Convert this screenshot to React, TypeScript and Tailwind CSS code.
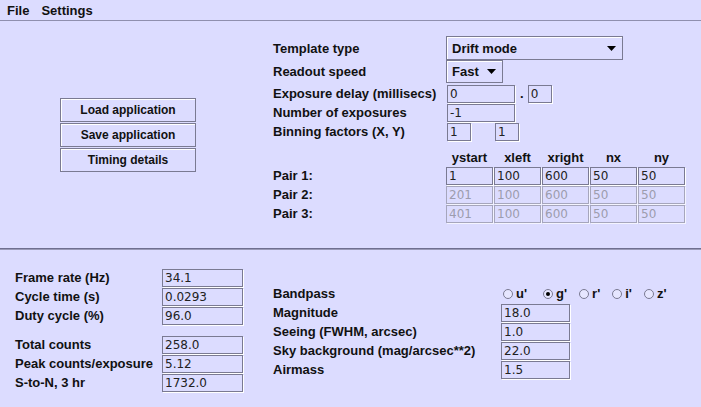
import React from 'react';

function Field({
  value,
  className,
  disabled,
}: {
  value: string;
  className: string;
  disabled?: boolean;
}) {
  return (
    <div
      className={`h-[18px] flex items-center pl-[2px] bg-[#dcdcff] font-['DejaVu_Sans',sans-serif] text-[12px] font-normal leading-none ${
        disabled
          ? 'border border-[#a6a6bc] text-[#9c9cae] shadow-[1px_1px_0_#f4f4ff]'
          : 'border border-[#7a7a92] text-[#222] shadow-[1px_1px_0_#ffffff]'
      } ${className}`}
    >
      {value}
    </div>
  );
}

function Arrow() {
  return (
    <svg width="9" height="5" viewBox="0 0 9 5">
      <polygon points="0,0 9,0 4.5,5" fill="#000" />
    </svg>
  );
}

function Combo({ label, className }: { label: string; className: string }) {
  return (
    <div
      className={`h-full flex items-center justify-between pl-[5px] pr-[6px] border border-[#7a7a92] shadow-[inset_1px_1px_0_#fff] ${className}`}
    >
      <span>{label}</span>
      <Arrow />
    </div>
  );
}

function Button({ label }: { label: string }) {
  return (
    <div className="w-[136px] h-[24px] flex items-center justify-center border border-[#7a7a92] shadow-[inset_1px_1px_0_#fff] text-[12px] font-bold">
      {label}
    </div>
  );
}

function Radio({ label, checked }: { label: string; checked?: boolean }) {
  return (
    <div className="flex items-center gap-[3px]">
      <span className="w-[10px] h-[10px] rounded-full border border-[#7a7a92] bg-[#e6e6ff] flex items-center justify-center">
        {checked && <span className="w-[4px] h-[4px] rounded-full bg-black" />}
      </span>
      <span>{label}</span>
    </div>
  );
}

export default function App() {
  const headers = ['ystart', 'xleft', 'xright', 'nx', 'ny'];
  const pairs = [
    { name: 'Pair 1:', values: ['1', '100', '600', '50', '50'], disabled: false },
    { name: 'Pair 2:', values: ['201', '100', '600', '50', '50'], disabled: true },
    { name: 'Pair 3:', values: ['401', '100', '600', '50', '50'], disabled: true },
  ];
  const timing = [
    ['Frame rate (Hz)', '34.1'],
    ['Cycle time (s)', '0.0293'],
    ['Duty cycle (%)', '96.0'],
  ];
  const counts = [
    ['Total counts', '258.0'],
    ['Peak counts/exposure', '5.12'],
    ['S-to-N, 3 hr', '1732.0'],
  ];
  const target = [
    ['Magnitude', '18.0'],
    ['Seeing (FWHM, arcsec)', '1.0'],
    ['Sky background (mag/arcsec**2)', '22.0'],
    ['Airmass', '1.5'],
  ];

  return (
    <div className="w-[701px] h-[407px] overflow-hidden bg-[#dcdcff] text-[#111] font-['Liberation_Sans',Arial,sans-serif] text-[13px] font-bold leading-none">
      {/* menu bar */}
      <div className="h-[21px] flex items-center gap-[12px] pl-[7px] border-b border-[#8f8fae]">
        <span>File</span>
        <span>Settings</span>
      </div>

      {/* top section */}
      <div className="h-[227px] flex">
        <div className="flex flex-col justify-center gap-px pl-[60px]">
          <Button label="Load application" />
          <Button label="Save application" />
          <Button label="Timing details" />
        </div>

        <div className="ml-[77px] pt-[15px] flex flex-col">
          <div className="flex items-center h-[24px]">
            <span className="w-[173px]">Template type</span>
            <Combo label="Drift mode" className="w-[177px]" />
          </div>
          <div className="flex items-center h-[23px] mb-px">
            <span className="w-[173px]">Readout speed</span>
            <Combo label="Fast" className="w-[57px]" />
          </div>
          <div className="flex items-center h-[19px]">
            <span className="w-[173px]">Exposure delay (millisecs)</span>
            <Field value="0" className="w-[68px] ml-px" />
            <span className="ml-[5px] mr-[4px]">.</span>
            <Field value="0" className="w-[24px]" />
          </div>
          <div className="flex items-center h-[19px]">
            <span className="w-[173px]">Number of exposures</span>
            <Field value="-1" className="w-[68px] ml-px" />
          </div>
          <div className="flex items-center h-[19px]">
            <span className="w-[173px]">Binning factors (X, Y)</span>
            <Field value="1" className="w-[24px] ml-px" />
            <Field value="1" className="w-[24px] ml-[24px]" />
          </div>

          <div className="flex items-end h-[16px] mt-[9px] pb-[2px]">
            <span className="w-[173px]" />
            <div className="flex gap-px">
              {headers.map((h) => (
                <span key={h} className="w-[47px] text-center">
                  {h}
                </span>
              ))}
            </div>
          </div>
          {pairs.map((p) => (
            <div key={p.name} className="flex items-center h-[19px]">
              <span className="w-[173px]">{p.name}</span>
              <div className="flex gap-px">
                {p.values.map((v, i) => (
                  <Field key={i} value={v} disabled={p.disabled} className="w-[47px]" />
                ))}
              </div>
            </div>
          ))}
        </div>
      </div>

      {/* separator */}
      <div className="h-px bg-[#6f6f90]" />
      <div className="h-px bg-[#9a9ab8]" />

      {/* bottom section */}
      <div className="flex">
        <div className="w-[273px] pl-[15px] pt-[18px]">
          {timing.map(([l, v]) => (
            <div key={l} className="flex items-center h-[19px]">
              <span className="w-[147px]">{l}</span>
              <Field value={v} className="w-[81px]" />
            </div>
          ))}
          <div className="h-[10px]" />
          {counts.map(([l, v]) => (
            <div key={l} className="flex items-center h-[19px]">
              <span className="w-[147px]">{l}</span>
              <Field value={v} className="w-[81px]" />
            </div>
          ))}
        </div>

        <div className="pt-[34px]">
          <div className="flex items-center h-[19px]">
            <span className="w-[230px]">Bandpass</span>
            <div className="flex items-center gap-[12px]">
              <div className="mr-[4px]">
                <Radio label="u'" />
              </div>
              <Radio label="g'" checked />
              <Radio label="r'" />
              <Radio label="i'" />
              <Radio label="z'" />
            </div>
          </div>
          {target.map(([l, v]) => (
            <div key={l} className="flex items-center h-[19px]">
              <span className="w-[228px]">{l}</span>
              <Field value={v} className="w-[69px]" />
            </div>
          ))}
        </div>
      </div>
    </div>
  );
}
